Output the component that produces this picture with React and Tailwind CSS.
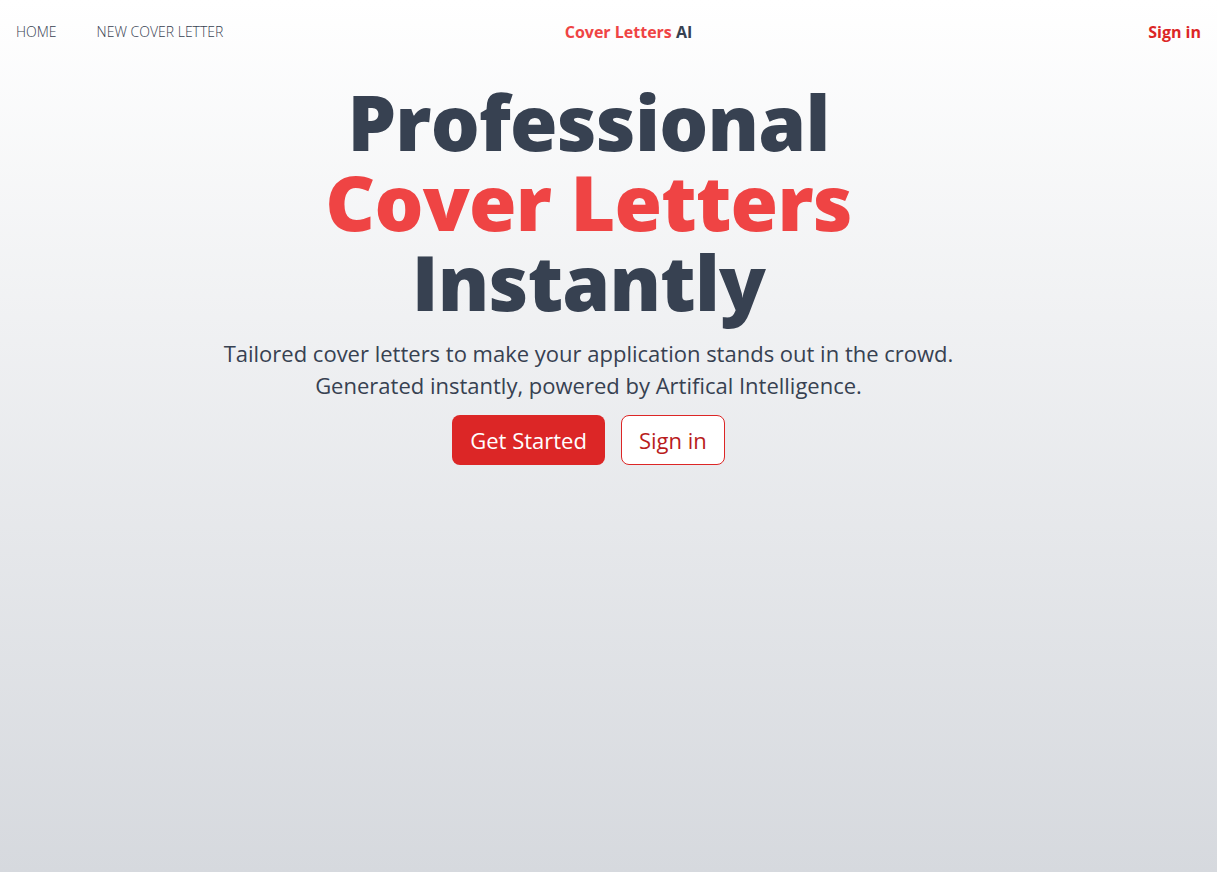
export default function App() {
    return (
        <div className="min-h-screen bg-gradient-to-b from-white to-[#d6d9de] font-['Open_Sans',sans-serif] text-[#374151]">
            {/* --- Навигация --- */}
            <nav className="flex items-center h-16 px-4">
                <div className="flex items-center gap-10 flex-1">
                    <a href="#" className="text-sm font-light uppercase text-[#374151]">Home</a>
                    <a href="#" className="text-sm font-light uppercase text-[#374151]">New Cover Letter</a>
                </div>
                <div className="text-base font-bold pl-10">
                    <span className="text-[#ef4444]">Cover Letters</span> <span className="text-[#374151]">AI</span>
                </div>
                <div className="flex flex-1 justify-end">
                    <a href="#" className="text-base font-bold text-[#dc2626]">Sign in</a>
                </div>
            </nav>

            {/* --- Главный блок --- */}
            <main className="flex flex-col items-center text-center pr-10">
                <h1 className="text-[77px] leading-[80px] font-extrabold tracking-[-0.01em] mt-[18px]">
                    <span className="block text-[#374151]">Professional</span>
                    <span className="block text-[#ef4444]">Cover Letters</span>
                    <span className="block text-[#374151]">Instantly</span>
                </h1>
                <p className="text-[22px] leading-8 text-[#374151] mt-[15px]">
                    Tailored cover letters to make your application stands out in the crowd.
                    <br />
                    Generated instantly, powered by Artifical Intelligence.
                </p>
                <div className="flex gap-4 mt-[14px]">
                    <button className="h-[50px] px-[18px] rounded-lg bg-[#dc2626] text-white text-[22px]">Get Started</button>
                    <button className="h-[50px] px-[17px] rounded-lg border border-[#dc2626] bg-white text-[#b91c1c] text-[22px]">Sign in</button>
                </div>
            </main>
        </div>
    );
}
